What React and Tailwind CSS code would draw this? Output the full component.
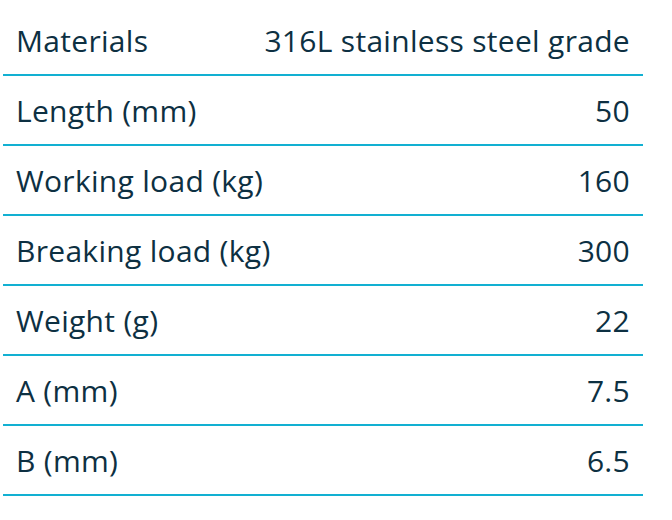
const rows = [
  ["Materials", "316L stainless steel grade"],
  ["Length (mm)", "50"],
  ["Working load (kg)", "160"],
  ["Breaking load (kg)", "300"],
  ["Weight (g)", "22"],
  ["A (mm)", "7.5"],
  ["B (mm)", "6.5"],
];

export default function App() {
  return (
    <div className="w-[672px] h-[520px] bg-white pt-[6px] pl-[3px] font-['Open_Sans',sans-serif] text-[#0d3042]">
      <div className="w-[640px]">
        {rows.map(([label, value]) => (
          <div
            key={label}
            className="flex items-center justify-between h-[70px] px-[13px] border-b-2 border-[#12b0d2] text-[30px] tracking-[0.01em]"
          >
            <span>{label}</span>
            <span>{value}</span>
          </div>
        ))}
      </div>
    </div>
  );
}
